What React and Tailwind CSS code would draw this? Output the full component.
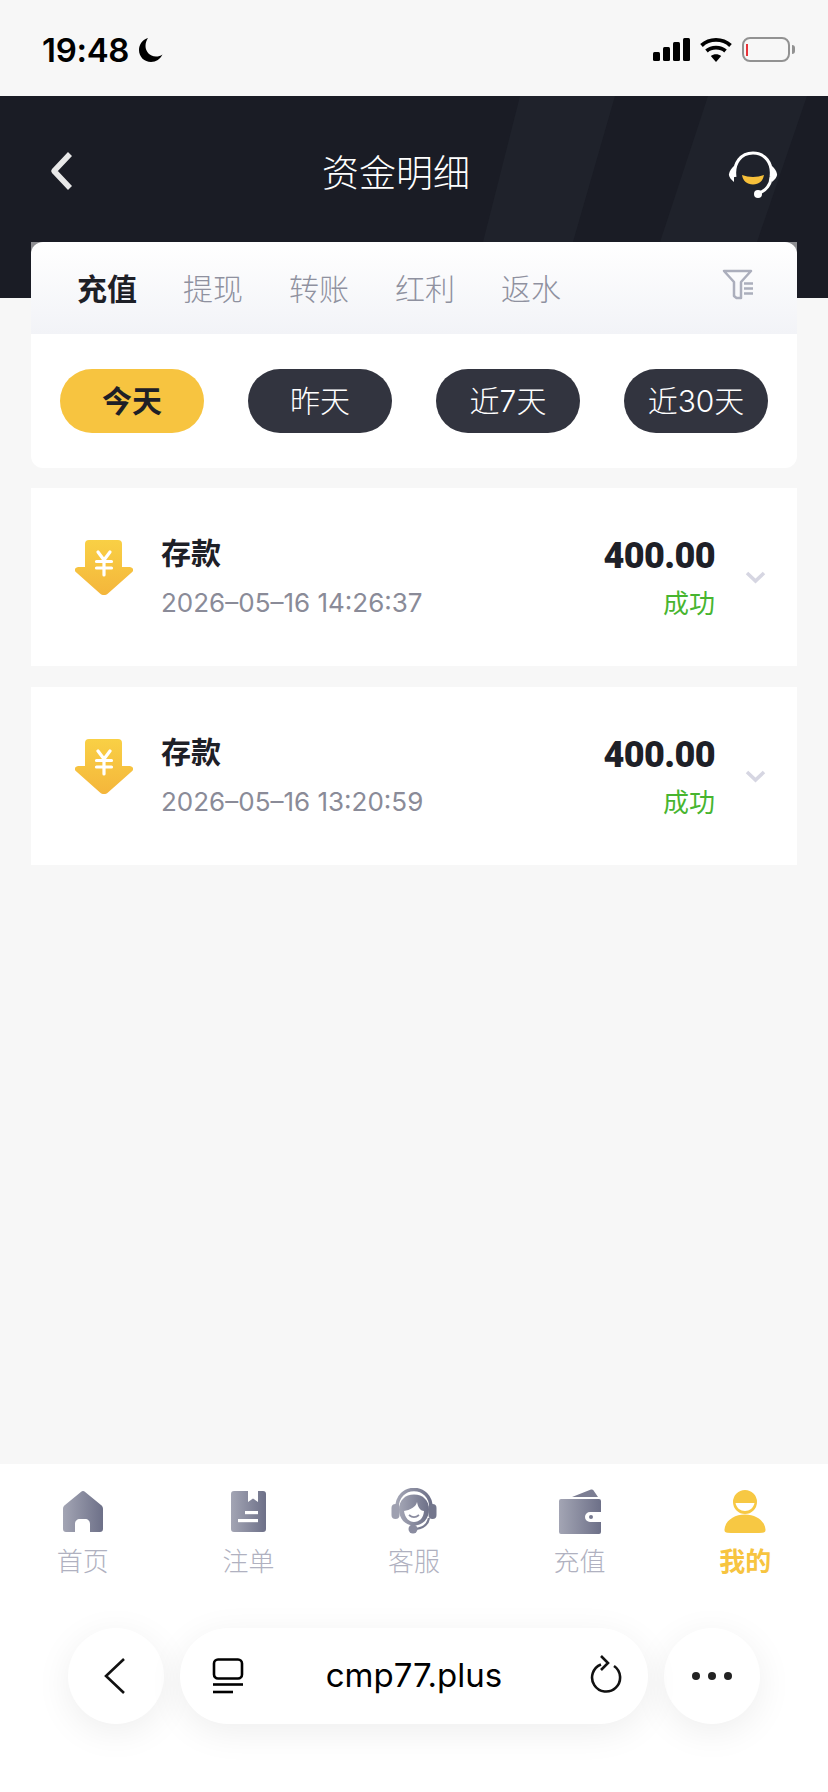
import React from "react";

const GRAD = (id) => (
  <linearGradient id={id} x1="0" y1="0" x2="1" y2="0">
    <stop offset="0" stopColor="#a3a5b4" />
    <stop offset="1" stopColor="#6d7088" />
  </linearGradient>
);

function DepositIcon({ id }) {
  return (
    <svg width="58" height="55" viewBox="0 0 58 55" className="shrink-0 mb-[19px]">
      <defs>
        <linearGradient id={id} x1="0" y1="0" x2="0" y2="1">
          <stop offset="0" stopColor="#f9d045" />
          <stop offset="1" stopColor="#f4b63b" />
        </linearGradient>
      </defs>
      <path fill={`url(#${id})`} d="M14 0H43a4 4 0 0 1 4 4V27H54.500c3.200 0 4.700 3 2.700 5L33 53.500c-2.400 2-5.600 2-8 0L.8 32c-2-2-.5-5 2.700-5H10V4a4 4 0 0 1 4-4z" />
      <path stroke="#fff" strokeWidth="3.200" strokeLinecap="round" strokeLinejoin="round" fill="none" d="M23 12l6 8 6-8M21.500 21.500H36.500M21.500 28H36.500M29 20V35" />
    </svg>
  );
}

function Row({ time, id }) {
  return (
    <div className="flex items-center h-[178px] bg-white pl-[44px] pr-[31px]">
      <DepositIcon id={id} />
      <div className="ml-[28px] flex flex-col">
        <div className="text-[30px] leading-[40px] font-semibold text-[#1e2027]">存款</div>
        <div className="mt-[12px] text-[26px] leading-[36px] text-[#8a8b98]">{time}</div>
      </div>
      <div className="ml-auto flex flex-col items-end mt-[4px]">
        <div className="font-[family-name:Roboto,sans-serif] text-[36px] leading-[40px] font-black text-[#1e2027] tracking-[-0.6px]">400.00</div>
        <div className="mt-[10px] text-[26px] leading-[36px] text-[#47b52f]">成功</div>
      </div>
      <svg width="21" height="13" viewBox="0 0 21 13" className="ml-[30px]">
        <path d="M2 2l8.500 8L19 2" fill="none" stroke="#d6d6e2" strokeWidth="3.600" />
      </svg>
    </div>
  );
}

function Pill({ label, active }) {
  return (
    <div
      className={
        active
          ? "w-[144px] h-[64px] rounded-full bg-[#f7c440] flex items-center justify-center text-[30px] font-semibold text-[#1e2027]"
          : "w-[144px] h-[64px] rounded-full bg-[#32343f] flex items-center justify-center text-[30px] font-light text-white"
      }
    >
      {label}
    </div>
  );
}

function TabItem({ label, active, children }) {
  return (
    <div className="flex flex-col items-center">
      <div className="h-[46px] flex items-center justify-center">{children}</div>
      <div className={active ? "mt-[12px] text-[26px] leading-[32px] font-semibold text-[#f7c440]" : "mt-[12px] text-[26px] leading-[32px] font-light text-[#b0b1c0]"}>{label}</div>
    </div>
  );
}

export default function App() {
  return (
    <div className="relative w-[828px] h-[1792px] overflow-hidden flex flex-col bg-[#f7f7f7] font-[family-name:Inter,'Noto_Sans_CJK_SC',sans-serif]">
      {/* status bar */}
      <div className="h-[96px] shrink-0 flex items-start justify-between pl-[42px] pr-[33px] pt-[30px]">
        <div className="flex items-center">
          <span className="text-[33px] leading-[40px] font-semibold text-black tracking-[-0.3px]">19:48</span>
          <svg width="26" height="26" viewBox="0 0 26 26" className="ml-[9px]">
            <path d="M10 1C4.500 2.500 1 7.500 1 13c0 7 5.500 12 12 12 5 0 9.500-3 11.500-7.500C22.500 19 20.500 19.500 18 19.500 11.500 19.500 7.500 14 7.500 9c0-3 1-6 2.500-8z" fill="#000" />
          </svg>
        </div>
        <div className="flex items-center gap-[10px] pt-[7px]">
          <svg width="37" height="23" viewBox="0 0 37 23">
            <rect x="0" y="14" width="7" height="9" rx="1.500" />
            <rect x="10" y="9" width="7" height="14" rx="1.500" />
            <rect x="20" y="4" width="7" height="19" rx="1.500" />
            <rect x="30" y="0" width="7" height="23" rx="1.500" />
          </svg>
          <svg width="32" height="25" viewBox="0 0 32 25" fill="none" stroke="#000" strokeWidth="3.800">
            <path d="M1.500 8.500C9.500 1 22.500 1 30.500 8.500" />
            <path d="M6.500 14C11.500 9.500 20.500 9.500 25.500 14" />
            <path d="M16 25l-5.200-6c3-2.300 7.400-2.300 10.400 0z" fill="#000" stroke="none" />
          </svg>
          <div className="flex items-center gap-[2px]">
            <div className="w-[48px] h-[25px] rounded-[8px] border-2 border-[#929292] flex items-center pl-[2px]">
              <div className="w-[2px] h-[12px] bg-[#e8343a]" />
            </div>
            <div className="w-[3px] h-[9px] rounded-r-full bg-[#929292]" />
          </div>
        </div>
      </div>

      {/* header */}
      <div className="relative h-[202px] shrink-0 bg-[#1a1c25] flex items-start justify-center overflow-hidden pr-[36px]">
        <svg className="absolute inset-0" width="828" height="202" viewBox="0 0 828 202">
          <path d="M520 0H615L573 146 558 202H468L483 146z" fill="#1f222b" />
          <path d="M708 0H807L757 146 742 202H645L660 146z" fill="#1f222b" />
        </svg>
        <svg width="24" height="40" viewBox="0 0 24 40" className="absolute left-[49px] top-[55px]">
          <path d="M21 3L5 20l16 17" fill="none" stroke="#e8e8e8" strokeWidth="5.500" strokeLinejoin="round" />
        </svg>
        <div className="relative mt-[54px] text-[37px] leading-[48px] font-light text-white">资金明细</div>
        <svg width="50" height="48" viewBox="0 0 50 48" className="absolute left-[728px] top-[55px]">
          <path d="M7 26C5 12 13 2 25 2s20 10 18 24" fill="none" stroke="#fff" strokeWidth="3" />
          <path d="M43 26c0 7-5 14-12 16" fill="none" stroke="#fff" strokeWidth="3" />
          <circle cx="30" cy="43" r="4" fill="#fff" />
          <path d="M6 15v16C2.500 28 0.500 25 1 23c.5-3 2.500-6 5-8zM44 15v16c3.500-3 5.500-6 5-8-.5-3-2.500-6-5-8z" fill="#fff" />
          <path d="M14 24c7 2.500 15 2.500 22 0-1 6-5 9.500-11 9.500S15 30 14 24z" fill="#f7c03a" />
        </svg>
      </div>

      {/* content */}
      <div className="relative -mt-[56px] mx-[31px] flex-1">
        <div className="rounded-b-[12px] bg-white overflow-hidden">
          <div className="bg-[#8e8e92]">
            <div className="h-[92px] rounded-t-[12px] bg-gradient-to-b from-white to-[#f2f3f7] flex items-center pl-[46px] pr-[44px]">
              <div className="flex gap-[46px] pt-[3px] text-[30px] font-light text-[#8f919f] w-full">
                <span className="w-[60px] font-semibold text-[#1e2027]">充值</span>
                <span className="w-[60px]">提现</span>
                <span className="w-[60px]">转账</span>
                <span className="w-[60px]">红利</span>
                <span className="w-[60px]">返水</span>
              </div>
              <svg width="31" height="31" viewBox="0 0 31 31" className="shrink-0 mb-[7px]" fill="none" stroke="#abaebc" strokeWidth="2.500" strokeLinejoin="round">
                <path d="M2 2H29L19 13V29H14.500L12 27V13z" />
                <path d="M22 14.500h9M22 19.500h9M22 24.500h9" strokeWidth="2.400" />
              </svg>
            </div>
          </div>
          <div className="flex justify-between px-[29px] py-[35px]">
            <Pill label="今天" active />
            <Pill label="昨天" />
            <Pill label="近7天" />
            <Pill label="近30天" />
          </div>
        </div>
        <div className="mt-[20px] flex flex-col gap-[21px]">
          <Row id="dep1" time="2026–05–16 14:26:37" />
          <Row id="dep2" time="2026–05–16 13:20:59" />
        </div>
      </div>

      {/* tab bar + browser bar */}
      <div className="h-[328px] shrink-0 bg-white pt-[24px]">
        <div className="grid grid-cols-5">
          <TabItem label="首页">
            <svg width="40" height="41" viewBox="0 0 40 41">
              <defs>{GRAD("g1")}</defs>
              <path fill="url(#g1)" fillRule="evenodd" d="M18.500.5c1-.7 2-.7 3 0L38 14c1.300 1 2 2.200 2 4v20c0 1.800-1.200 3-3 3H3c-1.800 0-3-1.200-3-3V18c0-1.800.7-3 2-4zM12 41H27V33c0-3-2-5-5-5H17c-3 0-5 2-5 5z" />
            </svg>
          </TabItem>
          <TabItem label="注单">
            <svg width="35" height="41" viewBox="0 0 35 41">
              <defs>{GRAD("g2")}</defs>
              <path fill="url(#g2)" d="M3 0H17V11L22 7.500 27 11V0H32a3 3 0 0 1 3 3V38a3 3 0 0 1-3 3H3a3 3 0 0 1-3-3V3a3 3 0 0 1 3-3z" />
              <rect x="14" y="20" width="13" height="3.200" fill="#fff" />
              <rect x="7" y="28" width="20" height="3.200" fill="#fff" />
            </svg>
          </TabItem>
          <TabItem label="客服">
            <svg width="46" height="46" viewBox="0 0 46 46">
              <defs>{GRAD("g3")}</defs>
              <path d="M6 20C6 8 14 1.500 23 1.500S40 8 40 20" fill="none" stroke="url(#g3)" strokeWidth="3.500" />
              <path d="M23 6.500c-9 0-15 6-15 15 0 9 6 16 15 16s15-7 15-16c0-9-6-15-15-15z" fill="url(#g3)" />
              <path d="M26 14c-1 5-7 8-13 9C14 30 18 34 23 34c5.500 0 9.500-4 10-11-3 0-6-3-7-9z" fill="#fff" />
              <path d="M18 27c3 2.500 7 2.500 10 0" fill="none" stroke="#8a8ca0" strokeWidth="1.800" />
              <rect x="0.500" y="16" width="8" height="15" rx="4" fill="#9ea0b0" />
              <rect x="37.500" y="16" width="8" height="15" rx="4" fill="#73768c" />
              <path d="M38 30c-1 6-6 10-13 11" fill="none" stroke="#777a90" strokeWidth="2.200" />
              <circle cx="22" cy="41" r="4.500" fill="#8a8ca0" />
            </svg>
          </TabItem>
          <TabItem label="充值">
            <svg width="42" height="45" viewBox="0 0 42 45">
              <defs>{GRAD("g4")}</defs>
              <path fill="#7c7e93" d="M13 8L32 .6c1-.4 1.800-.2 2.400.7L39 8z" />
              <path fill="url(#g4)" d="M2 10H40a2 2 0 0 1 2 2V23H31a5 5 0 0 0 0 10H42V43a2 2 0 0 1-2 2H2a2 2 0 0 1-2-2V12a2 2 0 0 1 2-2z" />
              <circle cx="32" cy="28" r="2" fill="#777a90" />
            </svg>
          </TabItem>
          <TabItem label="我的" active>
            <svg width="42" height="43" viewBox="0 0 42 43">
              <path fill="#f7c843" fillRule="evenodd" d="M21 0a12 12 0 0 1 12 12 12 12 0 0 1-12 12A12 12 0 0 1 9 12 12 12 0 0 1 21 0zM11.500 13c1 5 5 8 9.500 8s8.500-3 9.500-8z" />
              <path fill="#f7c843" d="M21 24.500c-11 0-20 6.500-20.500 15-.2 2 1 3 3 3.200 11 .6 24 .6 35 0 2-.2 3.200-1.200 3-3.200-.5-8.500-9.500-15-20.500-15z" />
            </svg>
          </TabItem>
        </div>
        <div className="mt-[50px] px-[68px] flex gap-[16px] text-black">
          <div className="w-[96px] h-[96px] rounded-full bg-white shadow-[0_8px_36px_rgba(0,0,0,0.07)] flex items-center justify-center pr-[3px]">
            <svg width="24" height="38" viewBox="0 0 24 38">
              <path d="M21 2L3 19l18 17" fill="none" stroke="#111" strokeWidth="2.600" />
            </svg>
          </div>
          <div className="relative flex-1 h-[96px] rounded-full bg-white shadow-[0_8px_36px_rgba(0,0,0,0.07)] flex items-center justify-center">
            <svg width="32" height="36" viewBox="0 0 32 36" className="absolute left-[32px] top-[30px]" fill="none" stroke="#000" strokeWidth="2.600">
              <rect x="2" y="1.500" width="28" height="19" rx="4" />
              <path d="M1 26.500H31" />
              <path d="M1 34H21" />
            </svg>
            <span className="font-[family-name:Inter,sans-serif] text-[33px] font-normal text-black">cmp77.plus</span>
            <svg width="34" height="38" viewBox="0 0 34 38" className="absolute right-[26px] top-[27px]" fill="none" stroke="#111" strokeWidth="2.600">
              <path d="M13 9.500A14 14 0 1 0 26 11" />
              <path d="M13 1l7 7-7 7" />
            </svg>
          </div>
          <div className="w-[96px] h-[96px] rounded-full bg-white shadow-[0_8px_36px_rgba(0,0,0,0.07)] flex items-center justify-center gap-[8px]">
            <div className="w-[8px] h-[8px] rounded-full bg-[#222]" />
            <div className="w-[8px] h-[8px] rounded-full bg-[#222]" />
            <div className="w-[8px] h-[8px] rounded-full bg-[#222]" />
          </div>
        </div>
      </div>
    </div>
  );
}
